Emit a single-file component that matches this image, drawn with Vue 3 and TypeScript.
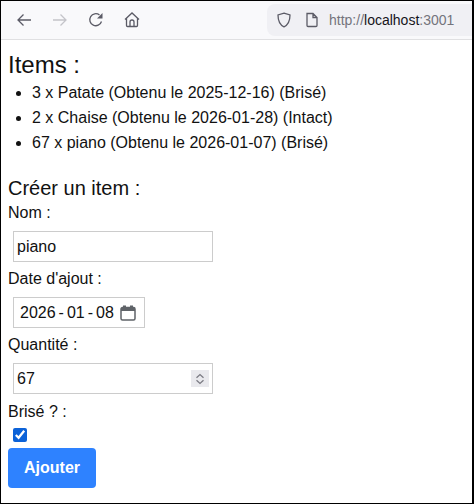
<script setup lang="ts">
const items: string[] = [
  '3 x Patate (Obtenu le 2025-12-16) (Brisé)',
  '2 x Chaise (Obtenu le 2026-01-28) (Intact)',
  '67 x piano (Obtenu le 2026-01-07) (Brisé)',
]
</script>

<template>
  <div class="frame">
    <header class="toolbar">
      <div class="nav">
        <svg class="ico" viewBox="0 0 16 16"><path d="M15 8H2M7.5 2.5 2 8l5.500 5.500" /></svg>
        <svg class="ico off" viewBox="0 0 16 16"><path d="M1 8h13M8.500 2.500 14 8l-5.500 5.500" /></svg>
        <svg class="ico" viewBox="0 0 16 16"><path d="M13.500 9.500A6 6 0 1 1 11.500 3" /><path class="fill" d="M14.500 1v5.500H9z" /></svg>
        <svg class="ico" viewBox="0 0 16 16"><path d="M1 7.500 8 1l7 6.500M2.500 6.500V13.500a1 1 0 0 0 1 1h9a1 1 0 0 0 1-1V6.500" /><path d="M6 14.500V10a2 2 0 0 1 4 0v4.500" /></svg>
      </div>
      <div class="urlbar">
        <svg class="ico shield" viewBox="0 0 16 16"><path d="M8 1.200 14 3c0 5-1 9.500-6 11.800C3 12.500 2 8 2 3z" /></svg>
        <svg class="ico page" viewBox="0 0 16 16"><path d="M3 1.500h6l4 4v8a1 1 0 0 1-1 1H4a1 1 0 0 1-1-1zM9 1.500v4h4" /></svg>
        <span class="url">http://<b>localhost</b>:3001</span>
      </div>
    </header>

    <main class="page-body">
      <h2 class="title">Items :</h2>
      <ul class="list">
        <li v-for="item in items" :key="item">{{ item }}</li>
      </ul>

      <h3 class="subtitle">Créer un item :</h3>
      <form class="form" @submit.prevent>
        <label class="lbl">Nom :</label>
        <input class="field wide" type="text" value="piano" />

        <label class="lbl">Date d'ajout :</label>
        <div class="field date">
          <span>2026</span><i>-</i><span>01</span><i>-</i><span>08</span>
          <svg class="cal" viewBox="0 0 16 16">
            <path d="M1 4a1.500 1.500 0 0 1 1.500-1.500h11A1.500 1.500 0 0 1 15 4v9.500a1.500 1.500 0 0 1-1.500 1.500h-11A1.500 1.500 0 0 1 1 13.500z" />
            <path class="thick" d="M1 4.500h14M4.500 .5v2.500M11.500 .5v2.500" />
          </svg>
        </div>

        <label class="lbl">Quantité :</label>
        <div class="field wide number">
          <span>67</span>
          <span class="spin">
            <svg viewBox="0 0 16 16"><path d="M4 6.500 8 3l4 3.500M4 9.500 8 13l4-3.500" /></svg>
          </span>
        </div>

        <label class="lbl last">Brisé ? :</label>
        <input class="check" type="checkbox" checked />
        <button class="submit" type="submit">Ajouter</button>
      </form>
    </main>
  </div>
</template>

<style>
html, body { margin: 0; background: #fff; }
</style>

<style scoped>
.frame {
  box-sizing: border-box;
  width: 474px;
  height: 504px;
  border: 1px solid #000;
  border-right-width: 2px;
  font-family: "Liberation Sans", Arial, sans-serif;
  font-size: 16px;
  color: #111;
  overflow: hidden;
}
.toolbar {
  box-sizing: border-box;
  height: 39px;
  background: #f9f9fb;
  border-bottom: 1px solid #e0e0e2;
  display: flex;
  align-items: flex-start;
  justify-content: space-between;
}
.nav {
  display: flex;
  gap: 20px;
  padding: 11px 0 0 15px;
}
.ico {
  width: 16px;
  height: 16px;
  fill: none;
  stroke: #5b5b66;
  stroke-width: 1.300;
  flex: none;
}
.ico.off { stroke: #c4c4c9; }
.ico .fill { fill: #5b5b66; stroke: none; }
.urlbar {
  width: 205px;
  height: 32px;
  margin-top: 3px;
  box-sizing: border-box;
  background: #f0f0f4;
  border-radius: 8px 0 0 8px;
  display: flex;
  align-items: center;
  padding-left: 9px;
  font-size: 14px;
  color: #74747c;
}
.page { margin-left: 12px; }
.url { margin-left: 9px; white-space: nowrap; }
.url b { font-weight: 400; color: #15141a; }
.page-body { padding: 11px 7px 0; }
.title {
  margin: 0;
  font-size: 24px;
  font-weight: 400;
  line-height: 27px;
}
.list {
  margin: 2px 0 0;
  padding-left: 24px;
}
.list li { line-height: 25px; }
.subtitle {
  margin: 22px 0 0;
  font-size: 20px;
  font-weight: 400;
  line-height: 23px;
}
.form {
  display: flex;
  flex-direction: column;
  align-items: flex-start;
}
.lbl { line-height: 18px; margin-top: 4px; }
.lbl.last { margin-top: 5px; }
.field {
  box-sizing: border-box;
  height: 31px;
  margin: 9px 0 4px 5px;
  border: 1px solid #ccc;
  background: #fff;
  font: inherit;
  color: #111;
  padding: 0 3px;
}
.wide { width: 200px; }
.date {
  width: 132px;
  display: flex;
  align-items: center;
  padding-left: 6px;
}
.date i { font-style: normal; margin: 0 3px; }
.cal {
  width: 16px;
  height: 16px;
  margin-left: 6px;
  fill: none;
  stroke: #5f6368;
  stroke-width: 1.500;
}
.cal .thick { stroke-width: 3; }
.number {
  display: flex;
  align-items: center;
  justify-content: space-between;
  padding-right: 3px;
}
.spin {
  width: 18px;
  height: 17px;
  background: #e9e9ed;
  display: flex;
  align-items: center;
  justify-content: center;
}
.spin svg {
  width: 14px;
  height: 14px;
  fill: none;
  stroke: #7a7a82;
  stroke-width: 1.500;
}
.check {
  width: 14px;
  height: 14px;
  margin: 7px 0 0 5px;
  accent-color: #0c62d8;
}
.submit {
  margin-top: 6px;
  width: 88px;
  height: 40px;
  border: 0;
  border-radius: 4px;
  background: #2e82ff;
  color: #fff;
  font: inherit;
  font-weight: 700;
}
</style>
